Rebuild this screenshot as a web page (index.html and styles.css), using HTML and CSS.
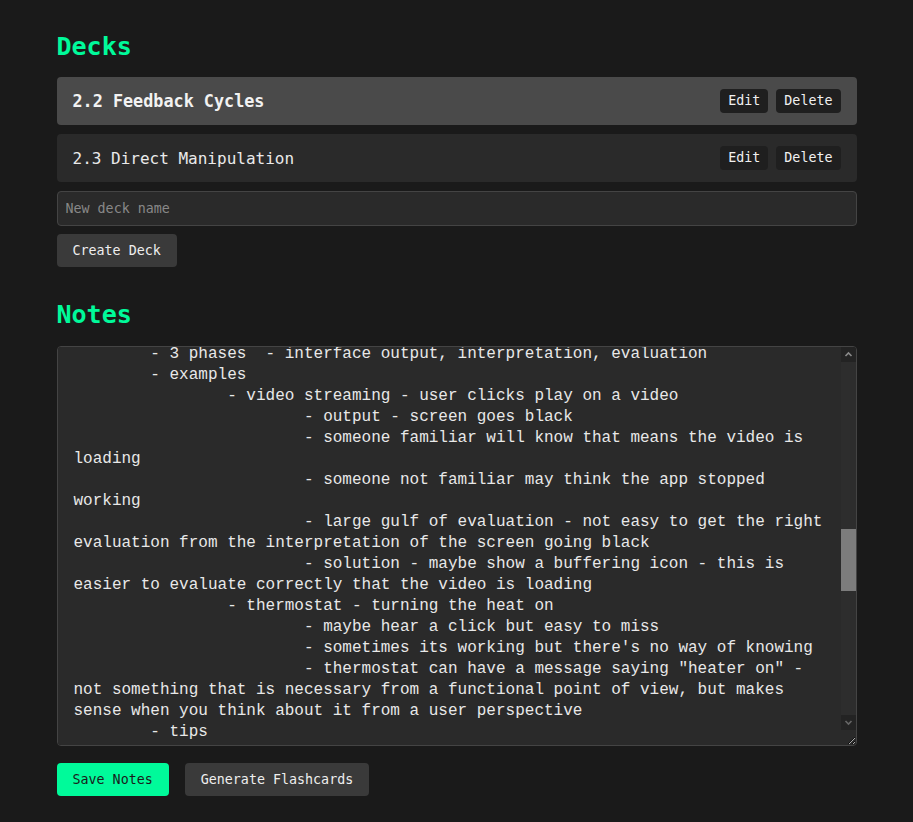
FILE: index.html
```html
<!DOCTYPE html>
<html lang="en">
<head>
<meta charset="utf-8">
<title>Flashcards</title>
<link rel="stylesheet" href="styles.css">
</head>
<body>
<main class="app">
  <section class="decks">
    <h2 class="section-title">Decks</h2>
    <ul class="deck-list">
      <li class="deck deck--active">
        <span class="deck-name">2.2 Feedback Cycles</span>
        <div class="deck-actions">
          <button class="btn-small">Edit</button>
          <button class="btn-small">Delete</button>
        </div>
      </li>
      <li class="deck">
        <span class="deck-name">2.3 Direct Manipulation</span>
        <div class="deck-actions">
          <button class="btn-small">Edit</button>
          <button class="btn-small">Delete</button>
        </div>
      </li>
    </ul>
    <input class="text-input" type="text" placeholder="New deck name">
    <div class="form-actions">
      <button class="btn btn-secondary">Create Deck</button>
    </div>
  </section>
  <section class="notes">
    <h2 class="section-title notes-title">Notes</h2>
    <div class="notes-box">
    <textarea class="notes-area" id="notes">2.2 Feedback Cycles

- feedback cycles are how people learn about the world
&#9;- we act, observe the result, then adjust
&#9;- exists in almost every field, not just HCI
&#9;- examples
&#9;&#9;- learning to walk
&#9;&#9;- driving a car
&#9;&#9;- economics and markets
&#9;&#9;- video games

- gulf of execution
&#9;- distance between user goals and the actions needed
&#9;- how hard is it to do what you want to do?
&#9;- 3 components
&#9;&#9;- identify intentions - what is the user trying to do
&#9;&#9;- identify actions - what can they do to get there
&#9;&#9;- execute in interface - actually doing it
&#9;- examples
&#9;&#9;- microwave - pressing "popcorn" vs typing a time
&#9;&#9;- powerpoint - adding a caption to an image
&#9;&#9;&#9;- user knows what they want
&#9;&#9;&#9;- but has to find the right menu option
&#9;&#9;&#9;- gulf is large if the action isn't obvious

- 5 tips: gulfs of execution
&#9;- 1. make functions discoverable
&#9;- 2. let the user mess around
&#9;- 3. be consistent with other tools
&#9;- 4. know your user
&#9;- 5. feedforward - show what will happen before it does

- gulf of evaluation
&#9;- distance between system state and the user's understanding
&#9;- how hard is it to know what happened?
&#9;- does the output tell the user if the goal was met?
&#9;- interface has to give feedback the user can read
&#9;- feedback should be
&#9;&#9;- visible
&#9;&#9;- timely
&#9;&#9;- easy to interpret
&#9;&#9;- tied to the action that caused it
&#9;- if feedback is missing, users repeat actions
&#9;&#9;- clicking a button over and over
&#9;&#9;- submitting a form twice
&#9;- if feedback is confusing, users lose trust
&#9;- small gulf = user instantly knows the result
&#9;- large gulf = user has to guess
&#9;- goal: make the system state obvious
&#9;- breaking it down
&#9;- 3 phases  - interface output, interpretation, evaluation
&#9;- examples
&#9;&#9;- video streaming - user clicks play on a video
&#9;&#9;&#9;- output - screen goes black
&#9;&#9;&#9;- someone familiar will know that means the video is loading
&#9;&#9;&#9;- someone not familiar may think the app stopped working
&#9;&#9;&#9;- large gulf of evaluation - not easy to get the right evaluation from the interpretation of the screen going black
&#9;&#9;&#9;- solution - maybe show a buffering icon - this is easier to evaluate correctly that the video is loading
&#9;&#9;- thermostat - turning the heat on
&#9;&#9;&#9;- maybe hear a click but easy to miss
&#9;&#9;&#9;- sometimes its working but there's no way of knowing
&#9;&#9;&#9;- thermostat can have a message saying "heater on" - not something that is necessary from a functional point of view, but makes sense when you think about it from a user perspective
&#9;- tips
&#9;&#9;- give continuous feedback
&#9;&#9;- vary feedback based on the situation
&#9;&#9;- consider emotional feedback
&#9;&#9;- give feedback on intentions, not just actions
&#9;&#9;- consider system status at all times

- 5 tips: gulfs of evaluation
&#9;- 1. give continuous feedback
&#9;- 2. vary your feedback
&#9;- 3. emphasize emotional feedback
&#9;- 4. give feedback on intentions
&#9;- 5. consider system status

- good design vs bad design
&#9;- good design - gulfs are small in both directions
&#9;- bad design - user can't tell what to do or what happened
&#9;- examples
&#9;&#9;- car dashboard warning lights
&#9;&#9;- file upload progress bars
&#9;&#9;- hotel key cards with a green light

- norman's feedback cycle
&#9;- goal -> plan -> specify -> perform
&#9;- perceive -> interpret -> compare -> goal
&#9;- execution side and evaluation side
&#9;- the interface sits in the middle

- reflections
&#9;- where have you seen a large gulf of execution?
&#9;- where have you seen a large gulf of evaluation?
&#9;- how would you redesign it?

- summary
&#9;- feedback cycles drive learning
&#9;- two gulfs - execution and evaluation
&#9;- goal of HCI is to bridge both gulfs
&#9;- design for the user, not the task alone</textarea>
      <div class="scrollbar" aria-hidden="true">
        <span class="sb-btn sb-up"><svg width="15" height="15" viewBox="0 0 15 15"><path d="M4.5 9 L7.5 6 L10.5 9" fill="none" stroke="#8a8a8a" stroke-width="1.6"/></svg></span>
        <span class="sb-track"><span class="sb-thumb" id="thumb"></span></span>
        <span class="sb-btn sb-down"><svg width="15" height="15" viewBox="0 0 15 15"><path d="M4.5 6 L7.5 9 L10.5 6" fill="none" stroke="#666666" stroke-width="1.6"/></svg></span>
      </div>
    </div>
    <div class="form-actions notes-actions">
      <button class="btn btn-primary">Save Notes</button>
      <button class="btn btn-secondary">Generate Flashcards</button>
    </div>
  </section>
</main>
<script src="script.js"></script>
</body>
</html>
```

FILE: styles.css
```css
* {
  box-sizing: border-box;
}

html {
  color-scheme: dark;
}

body {
  margin: 0;
  background: #1a1a1a;
  color: #e8e8e8;
  font-family: "DejaVu Sans Mono", monospace;
  font-size: 16px;
}

.app {
  max-width: 800px;
  margin: 0 auto;
  padding-top: 33px;
}

.section-title {
  margin: 0 0 16px;
  font-size: 25px;
  line-height: 28px;
  font-weight: bold;
  color: #00fa9a;
}

.deck-list {
  list-style: none;
  margin: 0 0 9px;
  padding: 0;
  display: flex;
  flex-direction: column;
  gap: 9px;
}

.deck {
  display: flex;
  align-items: center;
  justify-content: space-between;
  height: 48px;
  padding: 0 16px;
  background: #2a2a2a;
  border-radius: 4px;
}

.deck--active {
  background: #4a4a4a;
}

.deck-name {
  font-size: 16px;
  color: #eaeaea;
}

.deck--active .deck-name {
  font-size: 16.8px;
  font-weight: bold;
  color: #f2f2f2;
}

.deck-actions {
  display: flex;
  gap: 8px;
}

.btn-small {
  font-family: "DejaVu Sans Mono", monospace;
  font-size: 13.33px;
  line-height: 16px;
  padding: 4px 8px;
  border: 0;
  border-radius: 4px;
  background: #1f1f1f;
  color: #f0f0f0;
}

.text-input {
  display: block;
  width: 100%;
  margin: 0 0 8px;
  padding: 8px;
  font-family: "DejaVu Sans Mono", monospace;
  font-size: 13.33px;
  line-height: 17px;
  color: #eeeeee;
  background: #2a2a2a;
  border: 1px solid #444444;
  border-radius: 4px;
}

.text-input::placeholder {
  color: #888888;
}

.form-actions {
  display: flex;
  gap: 16px;
}

.btn {
  font-family: "DejaVu Sans Mono", monospace;
  font-size: 13.33px;
  line-height: 17px;
  padding: 8px 16px;
  border: 0;
  border-radius: 4px;
}

.btn-secondary {
  background: #3a3a3a;
  color: #eeeeee;
}

.btn-primary {
  background: #00fa9a;
  color: #1a1a1a;
}

.notes {
  margin-top: 34px;
}

.notes-title {
  margin-bottom: 17px;
}

.notes-box {
  position: relative;
  margin: 0 0 17px;
}

.notes-area {
  display: block;
  width: 100%;
  height: 400px;
  margin: 0;
  padding: 16px 31px 16px 16px;
  font-family: "Liberation Mono", monospace;
  font-size: 16px;
  line-height: 21px;
  color: #e8e8e8;
  background: #2a2a2a;
  border: 1px solid #444444;
  border-radius: 4px;
  scrollbar-width: none;
}

.scrollbar {
  position: absolute;
  top: 1px;
  right: 1px;
  width: 15px;
  height: 383px;
  display: flex;
  flex-direction: column;
  background: #2d2d2d;
  border-top-right-radius: 3px;
  overflow: hidden;
  pointer-events: none;
}

.sb-btn {
  flex: 0 0 15px;
  height: 15px;
  display: block;
  background: #232323;
}

.sb-btn svg {
  display: block;
}

.sb-track {
  flex: 1;
  position: relative;
  display: block;
}

.sb-thumb {
  position: absolute;
  left: 0;
  right: 0;
  top: 165px;
  height: 61px;
  background: #7c7c7c;
}
```

FILE: script.js
```js
var notes = document.getElementById('notes');
var thumb = document.getElementById('thumb');

function syncThumb() {
  var track = 353;
  var total = notes.scrollHeight;
  var visible = notes.clientHeight;
  var size = Math.max(20, Math.round(track * visible / total));
  var maxScroll = Math.max(1, total - visible);
  var top = Math.round((track - size) * notes.scrollTop / maxScroll);
  thumb.style.height = size + 'px';
  thumb.style.top = top + 'px';
}

notes.scrollTop = 1069;
syncThumb();
notes.addEventListener('scroll', syncThumb);
```
